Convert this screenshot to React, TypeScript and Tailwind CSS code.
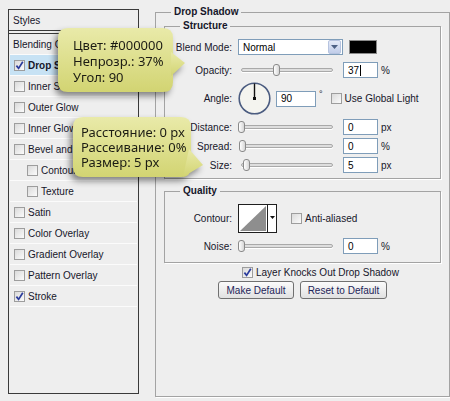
import type { ReactNode } from 'react';

const LAYER_STYLES: { label: string; checked?: boolean; active?: boolean; sub?: boolean }[] = [
  { label: 'Drop Shadow', checked: true, active: true },
  { label: 'Inner Shadow' },
  { label: 'Outer Glow' },
  { label: 'Inner Glow' },
  { label: 'Bevel and Emboss' },
  { label: 'Contour', sub: true },
  { label: 'Texture', sub: true },
  { label: 'Satin' },
  { label: 'Color Overlay' },
  { label: 'Gradient Overlay' },
  { label: 'Pattern Overlay' },
  { label: 'Stroke', checked: true },
];

function Checkbox({ checked = false }: { checked?: boolean }) {
  return (
    <span className="flex h-[11px] w-[11px] shrink-0 items-center justify-center border border-[#9d9d9d] bg-[linear-gradient(135deg,#dadada,#fbfbfb)]">
      {checked && (
        <svg width="9" height="9" viewBox="0 0 9 9">
          <path d="M1.4 4.6 L3.6 7.4 L7.8 0.8" stroke="#2b3c9c" strokeWidth="1.7" fill="none" />
        </svg>
      )}
    </span>
  );
}

function Slider({ thumb }: { thumb: number }) {
  return (
    <div className="relative flex h-[12px] w-[98px] shrink-0 items-center px-[3px]">
      <div className="h-[4px] w-full rounded-full border border-[#a9a9a9] bg-[#dedede] shadow-[0_1px_0_#fff]" />
      <span
        className="absolute top-0 h-[12px] w-[7px] rounded-[3px] border border-[#8a8a8a] bg-[linear-gradient(90deg,#ffffff,#d6d6d6)]"
        style={{ left: thumb }}
      />
    </div>
  );
}

function NumberBox({ value, width = 35, caret = false }: { value: string; width?: number; caret?: boolean }) {
  return (
    <div
      className="flex h-[16px] shrink-0 items-center border border-[#7f9db9] bg-white pl-[4px] text-[10px] text-black"
      style={{ width }}
    >
      <span className={caret ? 'border-r border-black pr-px leading-[11px]' : ''}>{value}</span>
    </div>
  );
}

function Row({ label, h = 16, mt, children }: { label: string; h?: number; mt: string; children: ReactNode }) {
  return (
    <div className={`flex items-center ${mt}`} style={{ height: h }}>
      <span className="w-[67px] shrink-0 text-right">{label}</span>
      <div className="ml-[6px] flex items-center">{children}</div>
    </div>
  );
}

function Tooltip({
  left,
  top,
  w,
  h,
  pointer,
  padding,
  lines,
  leading,
}: {
  left: number;
  top: number;
  w: number;
  h: number;
  pointer: string;
  padding: string;
  lines: string[];
  leading: string;
}) {
  const body = `M10 0 H${w - 10} Q${w} 0 ${w} 10 V${h - 10} Q${w} ${h} ${w - 10} ${h} H10 Q0 ${h} 0 ${h - 10} V10 Q0 0 10 0 Z`;
  return (
    <div
      className="absolute drop-shadow-[-3px_4px_3px_rgba(0,0,0,0.45)]"
      style={{ left, top, width: w + 16, height: h }}
    >
      <svg className="absolute inset-0" width={w + 16} height={h} viewBox={`0 0 ${w + 16} ${h}`}>
        <defs>
          <linearGradient id={`tip${left}`} x1="0" y1="0" x2="0" y2="1">
            <stop offset="0" stopColor="#e9eaa9" />
            <stop offset="1" stopColor="#d2d472" />
          </linearGradient>
        </defs>
        <path d={body} fill={`url(#tip${left})`} />
        <path d={pointer} fill={`url(#tip${left})`} />
      </svg>
      <div className={`relative font-['Noto_Sans',sans-serif] text-[13px] text-[#1c1c14] ${padding} ${leading}`}>
        {lines.map((l) => (
          <div key={l}>{l}</div>
        ))}
      </div>
    </div>
  );
}

export default function App() {
  return (
    <div className="relative flex h-[401px] w-[450px] overflow-hidden bg-[#eeeeee] font-['Liberation_Sans',Arial,sans-serif] text-[10px] text-[#16162a]">
      {/* styles list */}
      <div className="ml-[8px] mt-[9px] flex h-[385px] w-[131px] shrink-0 flex-col border border-[#3a3a3a] bg-[#eeeeee]">
        <div className="flex h-[21px] items-center border-b border-[#3a3a3a] pl-[4px]">Styles</div>
        <div className="mt-[2px] border-t border-[#3a3a3a]">
          <div className="mx-px flex h-[21px] items-center border-b border-[#fbfbfb] pl-[3px]">Blending Options: Default</div>
          {LAYER_STYLES.map((s) => (
            <div
              key={s.label}
              className={`mx-px flex h-[21px] items-center gap-[2px] border-b border-[#fbfbfb] ${s.sub ? 'pl-[17px]' : 'pl-[4px]'} ${s.active ? 'bg-[#c7e2f4] font-bold' : ''}`}
            >
              <Checkbox checked={s.checked} />
              <span className="ml-px">{s.label}</span>
            </div>
          ))}
        </div>
      </div>

      {/* drop shadow settings */}
      <fieldset className="ml-[16px] mt-[6px] h-[391px] w-[295px] shrink-0 border border-[#a3a3a3] px-[8px] shadow-[1px_1px_0_#fff]">
        <legend className="ml-[7px] px-[3px] text-[10px] font-bold leading-[12px]">Drop Shadow</legend>

        <fieldset className="mt-[2px] border border-[#a3a3a3] pb-[5px] shadow-[1px_1px_0_#fff]">
          <legend className="ml-[15px] px-[3px] font-bold leading-[12px]">Structure</legend>

          <Row label="Blend Mode:" mt="mt-[7px]">
            <div className="flex h-[16px] w-[105px] items-center border border-[#7f9db9] bg-white pl-[4px] text-black">
              <span className="flex-1">Normal</span>
              <span className="mr-px flex h-[14px] w-[13px] items-center justify-center rounded-[2px] border border-[#b6c3df] bg-[linear-gradient(180deg,#e4eaf8,#c1cde9)]">
                <svg width="7" height="4" viewBox="0 0 7 4">
                  <path d="M0 0 H7 L3.5 4 Z" fill="#4d6185" />
                </svg>
              </span>
            </div>
            <span className="ml-[6px] h-[14px] w-[28px] border border-[#8a8a8a] bg-black" />
          </Row>

          <Row label="Opacity:" mt="mt-[7px]">
            <Slider thumb={35} />
            <div className="ml-[7px]">
              <NumberBox value="37" caret />
            </div>
            <span className="ml-[3px]">%</span>
          </Row>

          <Row label="Angle:" h={33} mt="mt-[4px]">
            <svg width="33" height="33" viewBox="0 0 33 33" className="shrink-0">
              <circle cx="16.5" cy="16.5" r="15.3" fill="#f4f4ef" stroke="#4b5c80" strokeWidth="1.6" />
              <line x1="16.5" y1="16.5" x2="16.5" y2="1.5" stroke="#111" strokeWidth="1.4" />
              <rect x="15" y="15" width="3" height="3" fill="#111" />
            </svg>
            <div className="ml-[5px]">
              <NumberBox value="90" width={40} />
            </div>
            <span className="ml-[3px] self-start pt-[6px] text-[9px]">°</span>
            <span className="ml-[8px]">
              <Checkbox />
            </span>
            <span className="ml-[3px]">Use Global Light</span>
          </Row>

          <Row label="Distance:" mt="mt-[4px]">
            <Slider thumb={0} />
            <div className="ml-[7px]">
              <NumberBox value="0" />
            </div>
            <span className="ml-[3px]">px</span>
          </Row>

          <Row label="Spread:" mt="mt-[3px]">
            <Slider thumb={1} />
            <div className="ml-[7px]">
              <NumberBox value="0" />
            </div>
            <span className="ml-[3px]">%</span>
          </Row>

          <Row label="Size:" mt="mt-[3px]">
            <Slider thumb={5} />
            <div className="ml-[7px]">
              <NumberBox value="5" />
            </div>
            <span className="ml-[3px]">px</span>
          </Row>
        </fieldset>

        <fieldset className="mt-[6px] border border-[#a3a3a3] pb-[8px] shadow-[1px_1px_0_#fff]">
          <legend className="ml-[15px] px-[3px] font-bold leading-[12px]">Quality</legend>

          <Row label="Contour:" h={29} mt="mt-[7px]">
            <div className="flex h-[29px] w-[39px] shrink-0 border border-[#1e1e1e] bg-white">
              <svg width="28" height="27" viewBox="0 0 28 27">
                <polygon points="1,26 27,1 27,26" fill="#8e8e8e" />
              </svg>
              <div className="flex flex-1 justify-center border-l border-[#1e1e1e] pt-[11px]">
                <svg width="5" height="3" viewBox="0 0 5 3">
                  <path d="M0 0 H5 L2.5 3 Z" fill="#111" />
                </svg>
              </div>
            </div>
            <span className="ml-[14px]">
              <Checkbox />
            </span>
            <span className="ml-[3px]">Anti-aliased</span>
          </Row>

          <Row label="Noise:" mt="mt-[5px]">
            <Slider thumb={0} />
            <div className="ml-[7px]">
              <NumberBox value="0" />
            </div>
            <span className="ml-[3px]">%</span>
          </Row>
        </fieldset>

        <div className="mt-[3px] flex h-[12px] items-center gap-[3px] pl-[78px]">
          <Checkbox checked />
          <span>Layer Knocks Out Drop Shadow</span>
        </div>

        <div className="mt-[3px] flex justify-center gap-[6px]">
          <button
            type="button"
            className="h-[18px] w-[76px] rounded-[3px] border border-[#707070] bg-[linear-gradient(180deg,#fbfbfb,#e1e1e1)] text-[10px] text-[#1d2459]"
          >
            Make Default
          </button>
          <button
            type="button"
            className="h-[18px] w-[87px] rounded-[3px] border border-[#707070] bg-[linear-gradient(180deg,#fbfbfb,#e1e1e1)] text-[10px] text-[#1d2459]"
          >
            Reset to Default
          </button>
        </div>
      </fieldset>

      <Tooltip
        left={58}
        top={28}
        w={115}
        h={64}
        pointer="M113 24 L127 35 L113 48 Z"
        padding="pl-[15px] pt-[9px]"
        leading="leading-[16px]"
        lines={['Цвет: #000000', 'Непрозр.: 37%', 'Угол: 90']}
      />
      <Tooltip
        left={73}
        top={117}
        w={118}
        h={60}
        pointer="M116 32 L130 48 L110 60 Z"
        padding="pl-[8px] pt-[8px]"
        leading="leading-[15px]"
        lines={['Расстояние: 0 px', 'Рассеивание: 0%', 'Размер: 5 px']}
      />
    </div>
  );
}
